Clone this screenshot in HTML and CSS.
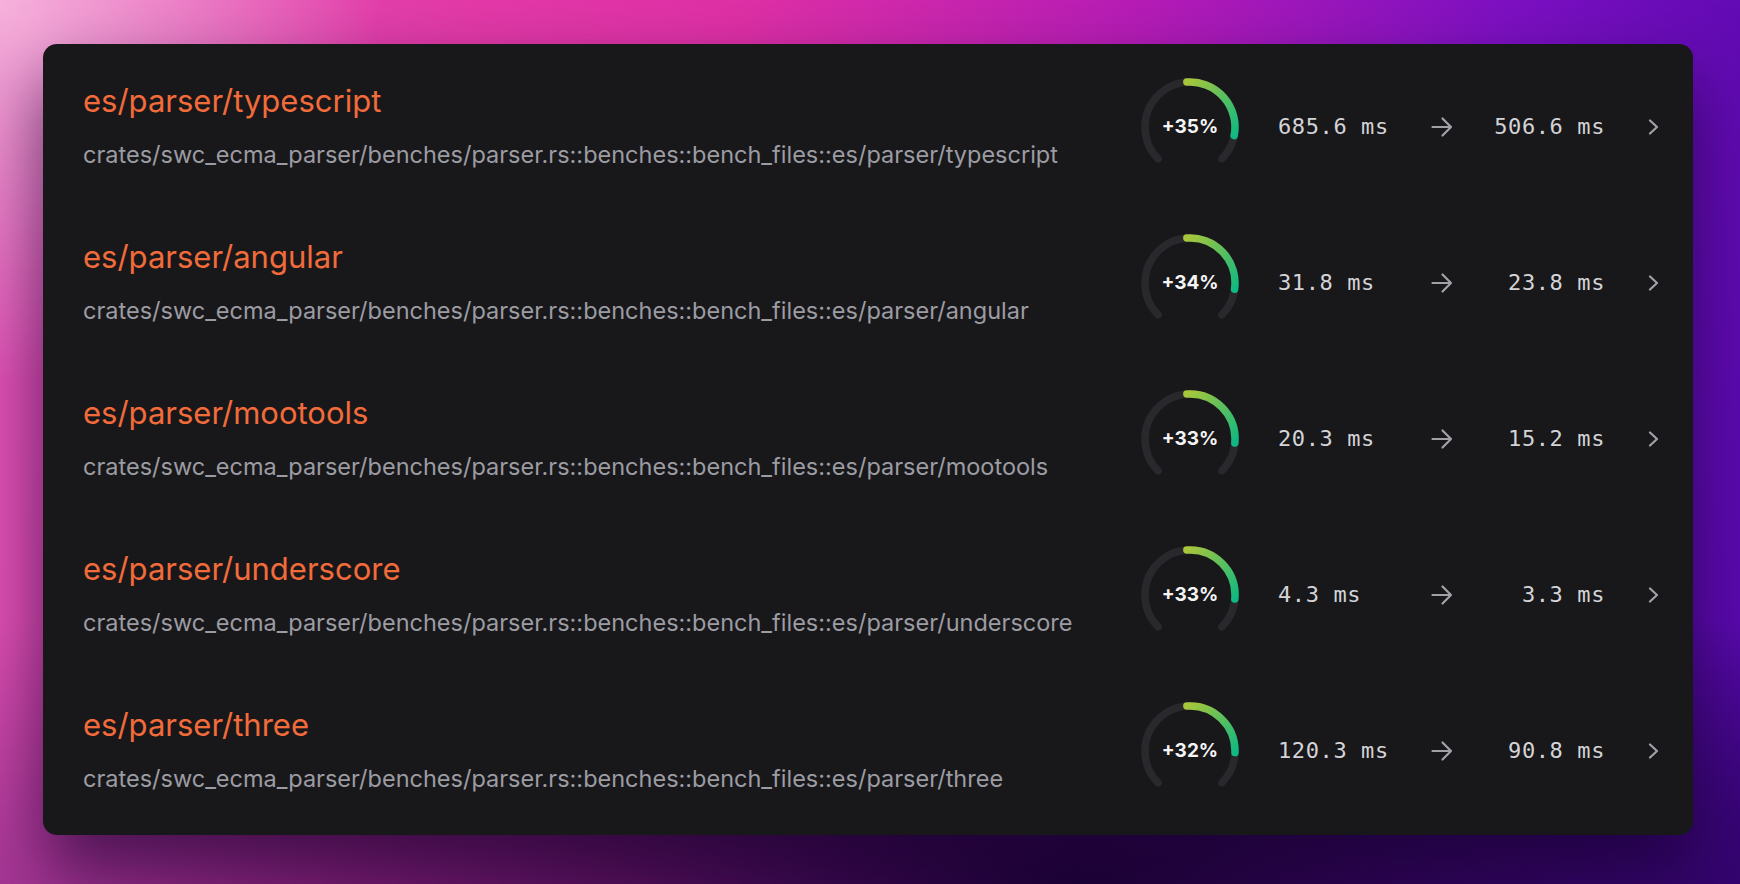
FILE: index.html
```html
<!DOCTYPE html>
<html lang="en">
<head>
    <meta charset="UTF-8">
    <meta name="viewport" content="width=device-width, initial-scale=1.0">
    <title>Benchmarks - swc_ecma_parser</title>
    <link rel="stylesheet" href="styles.css">
</head>
<body>
    <div class="card">
        <svg width="0" height="0" class="defs">
            <defs>
                <linearGradient id="gauge-fill" x1="0" y1="0" x2="1" y2="1">
                    <stop offset="0%" stop-color="#a8c63a"/>
                    <stop offset="100%" stop-color="#10b981"/>
                </linearGradient>
            </defs>
        </svg>

        <div class="bench">
            <div class="bench-info">
                <div class="bench-name">es/parser/typescript</div>
                <div class="bench-path">crates/swc_ecma_parser/benches/parser.rs::benches::bench_files::es/parser/typescript</div>
            </div>
            <div class="gauge">
                <svg viewBox="0 0 100 100" width="100" height="100">
                    <path class="track" d="M 18.18 81.82 A 45 45 0 1 1 81.82 81.82"/>
                    <path class="fill" d="M 46.86 5.11 A 45 45 0 0 1 94.17 58.59"/>
                </svg>
                <span class="gauge-label">+35%</span>
            </div>
            <div class="time before">685.6 ms</div>
            <div class="arrow">
                <svg viewBox="0 0 24 24" width="24" height="24"><path d="M2.5 12h18.5M12.5 3.5l8.5 8.5-8.5 8.5"/></svg>
            </div>
            <div class="time after">506.6 ms</div>
            <div class="chevron">
                <svg viewBox="0 0 12 16" width="12" height="16"><path d="M2 1.5l7 6.5-7 6.5"/></svg>
            </div>
        </div>

        <div class="bench">
            <div class="bench-info">
                <div class="bench-name">es/parser/angular</div>
                <div class="bench-path">crates/swc_ecma_parser/benches/parser.rs::benches::bench_files::es/parser/angular</div>
            </div>
            <div class="gauge">
                <svg viewBox="0 0 100 100" width="100" height="100">
                    <path class="track" d="M 18.18 81.82 A 45 45 0 1 1 81.82 81.82"/>
                    <path class="fill" d="M 46.86 5.11 A 45 45 0 0 1 94.56 56.26"/>
                </svg>
                <span class="gauge-label">+34%</span>
            </div>
            <div class="time before">31.8 ms</div>
            <div class="arrow">
                <svg viewBox="0 0 24 24" width="24" height="24"><path d="M2.5 12h18.5M12.5 3.5l8.5 8.5-8.5 8.5"/></svg>
            </div>
            <div class="time after">23.8 ms</div>
            <div class="chevron">
                <svg viewBox="0 0 12 16" width="12" height="16"><path d="M2 1.5l7 6.5-7 6.5"/></svg>
            </div>
        </div>

        <div class="bench">
            <div class="bench-info">
                <div class="bench-name">es/parser/mootools</div>
                <div class="bench-path">crates/swc_ecma_parser/benches/parser.rs::benches::bench_files::es/parser/mootools</div>
            </div>
            <div class="gauge">
                <svg viewBox="0 0 100 100" width="100" height="100">
                    <path class="track" d="M 18.18 81.82 A 45 45 0 1 1 81.82 81.82"/>
                    <path class="fill" d="M 46.86 5.11 A 45 45 0 0 1 94.83 53.92"/>
                </svg>
                <span class="gauge-label">+33%</span>
            </div>
            <div class="time before">20.3 ms</div>
            <div class="arrow">
                <svg viewBox="0 0 24 24" width="24" height="24"><path d="M2.5 12h18.5M12.5 3.5l8.5 8.5-8.5 8.5"/></svg>
            </div>
            <div class="time after">15.2 ms</div>
            <div class="chevron">
                <svg viewBox="0 0 12 16" width="12" height="16"><path d="M2 1.5l7 6.5-7 6.5"/></svg>
            </div>
        </div>

        <div class="bench">
            <div class="bench-info">
                <div class="bench-name">es/parser/underscore</div>
                <div class="bench-path">crates/swc_ecma_parser/benches/parser.rs::benches::bench_files::es/parser/underscore</div>
            </div>
            <div class="gauge">
                <svg viewBox="0 0 100 100" width="100" height="100">
                    <path class="track" d="M 18.18 81.82 A 45 45 0 1 1 81.82 81.82"/>
                    <path class="fill" d="M 46.86 5.11 A 45 45 0 0 1 94.83 53.92"/>
                </svg>
                <span class="gauge-label">+33%</span>
            </div>
            <div class="time before">4.3 ms</div>
            <div class="arrow">
                <svg viewBox="0 0 24 24" width="24" height="24"><path d="M2.5 12h18.5M12.5 3.5l8.5 8.5-8.5 8.5"/></svg>
            </div>
            <div class="time after">3.3 ms</div>
            <div class="chevron">
                <svg viewBox="0 0 12 16" width="12" height="16"><path d="M2 1.5l7 6.5-7 6.5"/></svg>
            </div>
        </div>

        <div class="bench">
            <div class="bench-info">
                <div class="bench-name">es/parser/three</div>
                <div class="bench-path">crates/swc_ecma_parser/benches/parser.rs::benches::bench_files::es/parser/three</div>
            </div>
            <div class="gauge">
                <svg viewBox="0 0 100 100" width="100" height="100">
                    <path class="track" d="M 18.18 81.82 A 45 45 0 1 1 81.82 81.82"/>
                    <path class="fill" d="M 46.86 5.11 A 45 45 0 0 1 94.97 51.57"/>
                </svg>
                <span class="gauge-label">+32%</span>
            </div>
            <div class="time before">120.3 ms</div>
            <div class="arrow">
                <svg viewBox="0 0 24 24" width="24" height="24"><path d="M2.5 12h18.5M12.5 3.5l8.5 8.5-8.5 8.5"/></svg>
            </div>
            <div class="time after">90.8 ms</div>
            <div class="chevron">
                <svg viewBox="0 0 12 16" width="12" height="16"><path d="M2 1.5l7 6.5-7 6.5"/></svg>
            </div>
        </div>
    </div>
</body>
</html>
```

FILE: styles.css
```css
html, body {
    margin: 0;
    height: 100%;
}

body {
    font-family: Inter, "Noto Sans", sans-serif;
    background:
        radial-gradient(circle at 0 0, rgba(247, 182, 222, 0.95) 0, rgba(247, 182, 222, 0) 380px),
        radial-gradient(ellipse 60% 38% at 62% 100%, rgba(18, 0, 45, 0.9) 0%, rgba(18, 0, 45, 0) 100%),
        linear-gradient(180deg, rgba(0, 0, 0, 0) 70%, rgba(30, 0, 80, 0.3) 100%),
        linear-gradient(97deg, #e054b6 0%, #e33aa8 25%, #df30a6 40%, #b51cb6 62%, #7c10c2 82%, #5608ae 100%);
    overflow: hidden;
}

.card {
    box-sizing: border-box;
    width: 1650px;
    margin: 44px 0 0 43px;
    padding: 4px 0 7px;
    background-color: #18181b;
    border-radius: 14px;
    box-shadow: 0 35px 70px rgba(20, 0, 45, 0.65);
}

.defs {
    position: absolute;
}

.bench {
    display: flex;
    align-items: center;
    padding: 34px 33px 33px 40px;
}

.bench-info {
    flex: 1;
    min-width: 0;
}

.bench-name {
    font-size: 31px;
    line-height: 38px;
    color: #f26b3a;
}

.bench-path {
    margin-top: 19px;
    font-size: 23.5px;
    line-height: 32px;
    color: #9c9ca3;
    white-space: nowrap;
}

.gauge {
    position: relative;
    width: 100px;
    height: 100px;
    margin: -20px 38px -20px -1px;
}

.gauge svg {
    display: block;
}

.gauge .track,
.gauge .fill {
    fill: none;
    stroke-width: 7.5;
    stroke-linecap: round;
}

.gauge .track {
    stroke: #29292d;
}

.gauge .fill {
    stroke: url(#gauge-fill);
}

.gauge-label {
    position: absolute;
    inset: 0;
    display: flex;
    align-items: center;
    justify-content: center;
    font-size: 19px;
    font-weight: 700;
    color: #f4f4f5;
}

.time {
    font-family: "DejaVu Sans Mono", "Liberation Mono", monospace;
    font-size: 22px;
    letter-spacing: 0.6px;
    color: #d4d4d8;
}

.time.before {
    width: 139px;
}

.time.after {
    width: 138px;
    text-align: right;
}

.arrow {
    width: 50px;
    display: flex;
    justify-content: center;
}

.arrow svg,
.chevron svg {
    fill: none;
    stroke: #a1a1aa;
    stroke-width: 2.2;
    stroke-linecap: round;
    stroke-linejoin: round;
}

.chevron {
    width: 55px;
    display: flex;
    justify-content: flex-end;
}
```
